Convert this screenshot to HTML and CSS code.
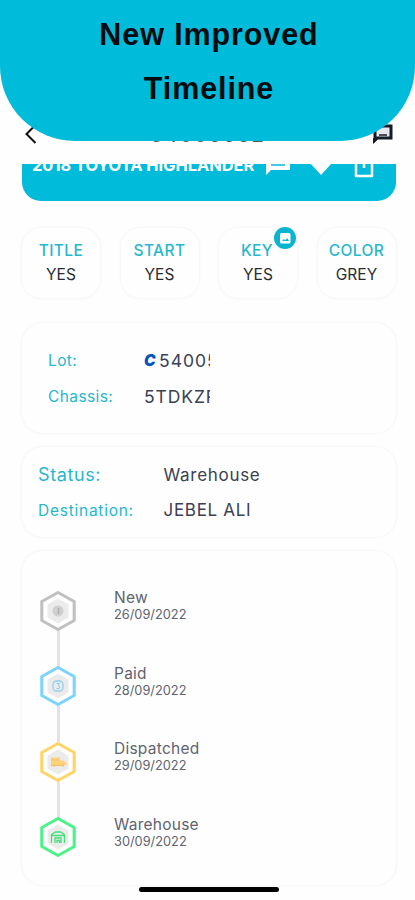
FILE: index.html
```html
<!DOCTYPE html>
<html lang="en">
<head>
<meta charset="utf-8">
<title>Timeline</title>
<link rel="stylesheet" href="styles.css">
</head>
<body>
<div class="screen">
  <header class="banner"><h1>New Improved<br>Timeline</h1></header>
  <nav class="nav">
    <svg class="back" width="14" height="22" viewBox="0 0 14 22"><path d="M11.500 2 2.500 11l9 9" fill="none" stroke="#111" stroke-width="2"/></svg>
    <span class="nav-title">54005562</span>
    <svg class="chat" width="24" height="24" viewBox="0 0 24 24"><path d="M4 4h16v12H6l-2 2z" fill="#e8e8ec" stroke="#171a2b" stroke-width="3"/><path d="M2 16v6l5-5z" fill="#171a2b"/><path d="M8 13h8" stroke="#171a2b" stroke-width="1.500"/></svg>
  </nav>
  <section class="vehicle">
    <div class="vehicle-row">
      <span class="vehicle-name">2018 TOYOTA HIGHLANDER</span>
      <svg class="v-chat" width="26" height="26" viewBox="0 0 26 26"><path d="M1 1h24v19H6l-5 5z" fill="#fff"/><path d="M6 8h14M6 12h14M6 15h14" stroke="#00bbd9" stroke-width="1.500"/></svg>
      <svg class="v-heart" width="26" height="24" viewBox="0 0 26 24"><path d="M13 24 2 12C-2 6 3 0 8 1c3 0 5 3 5 3s2-3 5-3c5-1 10 5 6 11z" fill="#fff"/></svg>
      <svg class="v-share" width="20" height="26" viewBox="0 0 20 26"><path d="M6 8H2v16h16V8h-4M10 16V2" fill="none" stroke="#fff" stroke-width="2.500" stroke-linejoin="round"/></svg>
    </div>
  </section>
  <section class="facts">
    <div class="fact"><b>TITLE</b><span>YES</span></div>
    <div class="fact"><b>START</b><span>YES</span></div>
    <div class="fact"><b class="key">KEY</b><span>YES</span>
      <svg class="badge" width="22" height="22" viewBox="0 0 22 22"><circle cx="11" cy="11" r="11" fill="#08b4d0"/><rect x="6" y="6" width="10.500" height="10.500" rx="1.500" fill="#fff"/><path d="m8 14 2-2 1.500 1.500L13 11l2 3z" fill="#08b4d0"/></svg>
    </div>
    <div class="fact"><b class="color">COLOR</b><span>GREY</span></div>
  </section>
  <section class="card lot">
    <div class="pair"><span class="label">Lot:</span><span class="value"><i>C</i><span class="cut lot-no">54005</span></span></div>
    <div class="pair chassis"><span class="label">Chassis:</span><span class="value cut vin">5TDKZR</span></div>
  </section>
  <section class="card status">
    <div class="pair"><span class="label s-label">Status:</span><span class="value s-value">Warehouse</span></div>
    <div class="pair"><span class="label d-label">Destination:</span><span class="value d-value">JEBEL ALI</span></div>
  </section>
  <section class="card timeline">
    <div class="step gray">
      <svg class="hex" width="38" height="42" viewBox="0 0 38 42"><path class="outer" d="M19 2.500 35.200 11.500v19L19 39.500 2.800 30.500v-19z"/><path class="inner" d="m19 8.500 10.500 6v13L19 33.500l-10.500-6v-13z"/><circle cx="19" cy="21" r="5.500" fill="#cfcfcf"/><path d="M19.500 18v6" stroke="#adadad" stroke-width="1.500"/></svg>
      <div class="text"><strong>New</strong><time>26/09/2022</time></div>
    </div>
    <div class="step blue">
      <svg class="hex" width="38" height="42" viewBox="0 0 38 42"><path class="outer" d="M19 2.500 35.200 11.500v19L19 39.500 2.800 30.500v-19z"/><path class="inner" d="m19 8.500 10.500 6v13L19 33.500l-10.500-6v-13z"/><rect x="14" y="16" width="10" height="10" rx="3.500" fill="none" stroke="#93cfee" stroke-width="1.300"/><path d="M17.500 18.500h3l-1.500 2c2.500.3 2.500 3 0 3h-1.500" fill="none" stroke="#86cdf0"/></svg>
      <div class="text"><strong>Paid</strong><time>28/09/2022</time></div>
    </div>
    <div class="step yellow">
      <svg class="hex" width="38" height="42" viewBox="0 0 38 42"><path class="outer" d="M19 2.500 35.200 11.500v19L19 39.500 2.800 30.500v-19z"/><path class="inner" d="m19 8.500 10.500 6v13L19 33.500l-10.500-6v-13z"/><path d="M12 16.500h9v3h3.500l3 2.500v2H12z" fill="#ffd27c"/><path d="M12 19h8M12 24.500h12" stroke="#f2c36a"/><circle cx="15" cy="24.500" r="1.200" fill="#fbc35b"/><circle cx="24" cy="24.500" r="1.200" fill="#fbc35b"/></svg>
      <div class="text"><strong class="w-disp">Dispatched</strong><time>29/09/2022</time></div>
    </div>
    <div class="step green">
      <svg class="hex" width="38" height="42" viewBox="0 0 38 42"><path class="outer" d="M19 2.500 35.200 11.500v19L19 39.500 2.800 30.500v-19z"/><path class="inner" d="m19 8.500 10.500 6v13L19 33.500l-10.500-6v-13z"/><path d="M12.500 27v-8.500l4-2.500h5l4 2.500V27M13 19.500h12M16 27v-5h6v5M18 27v-2.500h2.500V27" fill="none" stroke="#43df79" stroke-width="1.300"/></svg>
      <div class="text"><strong>Warehouse</strong><time>30/09/2022</time></div>
    </div>
  </section>
  <div class="home"></div>
</div>
</body>
</html>
```
FILE: styles.css
```css
* { box-sizing: border-box; }
body { margin: 0; background: #fefefe; font-family: Inter, "Liberation Sans", sans-serif; }
.screen { position: relative; width: 415px; height: 900px; overflow: hidden; }
.banner { position: absolute; z-index: 2; top: 0; left: 0; width: 415px; height: 141px; padding-top: 7px; background: #00bbd9; border-radius: 0 0 75px 75px; text-align: center; }
h1 { margin: 0; padding-left: 3px; font: bold 30.500px/54px "Liberation Sans", sans-serif; letter-spacing: .9px; color: #080c10; }
.nav { height: 164px; padding: 121px 20px 0 24px; display: flex; justify-content: space-between; align-items: flex-start; }
.back { margin-top: 2px; }
.nav-title { padding-left: 7px; font-size: 20px; font-weight: 500; line-height: 28px; letter-spacing: 1.800px; color: #555; }
.chat { margin-top: 1px; }
.vehicle { width: 374px; height: 37px; margin-left: 22px; overflow: hidden; background: #00bbd9; border-radius: 0 0 19px 19px; }
.vehicle-row { display: flex; margin-top: -14px; padding-left: 10px; }
.vehicle-name { width: 233px; flex: none; font-weight: 700; font-size: 16.400px; line-height: 30px; color: #fff; white-space: nowrap; }
.v-chat { margin: 0 17px 0 0; }
.v-heart { margin-top: 1px; }
.v-share { margin: 2px 0 0 20px; }
.facts { display: grid; grid-template-columns: repeat(4, 80px); column-gap: 18.500px; margin: 26px 0 0 21px; }
.fact { position: relative; height: 72px; padding-top: 11px; border: 1px solid #f8f8f8; border-radius: 20px; box-shadow: 0 0 3px #f8f8f8; display: flex; flex-direction: column; align-items: center; font-size: 15.500px; line-height: 24px; color: #292c33; }
.fact b { font-weight: 500; color: #27b7cd; letter-spacing: .4px; }
.badge { position: absolute; top: -1px; right: 1px; }
.fact .key { margin-right: 2px; }
.card { width: 376px; margin-left: 21px; border: 1px solid #f8f8f8; border-radius: 22px; box-shadow: 0 0 3px #f8f8f8; }
.pair { display: flex; height: 36px; align-items: center; }
.label { flex: none; color: #27b7cd; }
.value { color: #3b4054; }
.lot { height: 112px; margin-top: 23px; padding: 20px 0 0 26px; }
.lot .pair { height: 35.500px; }
.lot .label { width: 96px; font-size: 15.500px; letter-spacing: .4px; }
.lot .value { display: flex; font-size: 17.500px; }
.value i { width: 15px; color: #0754bd; font-weight: 900; font-size: 15.500px; line-height: 21px; }
.cut { overflow: hidden; white-space: nowrap; }
.lot-no { width: 51px; letter-spacing: 1px; }
.lot .vin { width: 66px; letter-spacing: .9px; }
.status { height: 92px; margin-top: 12px; padding: 10px 0 0 16px; }
.status .pair { height: 35.500px; }
.status .label { width: 125.500px; }
.status .value { font-size: 17px; letter-spacing: .7px; }
.status .s-label { font-size: 18px; letter-spacing: .6px; }
.status .d-label { font-size: 15.500px; letter-spacing: .75px; }
.timeline { height: 336px; margin-top: 12px; padding: 38.500px 0 0 17px; }
.step { position: relative; display: flex; height: 75.500px; color: #c0c0c0; }
.step:not(:last-child)::after { content: ""; position: absolute; top: 41px; left: 18px; width: 2.500px; height: 36px; background: #e3e3e3; }
.hex { flex: none; width: 38px; height: 42px; }
.outer { fill: #fff; stroke: currentColor; stroke-width: 3.100; stroke-linejoin: round; }
.inner { fill: #ebebeb; }
.blue { color: #7dd3fb; }
.yellow { color: #ffd466; }
.green { color: #4bf28a; }
.text { margin: -.5px 0 0 37px; display: flex; flex-direction: column; color: #606370; }
.text strong { font-weight: 400; font-size: 15.500px; line-height: 18px; letter-spacing: .25px; }
time { font-size: 12.800px; line-height: 16px; }
.home { position: absolute; left: 139px; top: 887px; width: 140px; height: 5px; border-radius: 3px; background: #000; }
```
